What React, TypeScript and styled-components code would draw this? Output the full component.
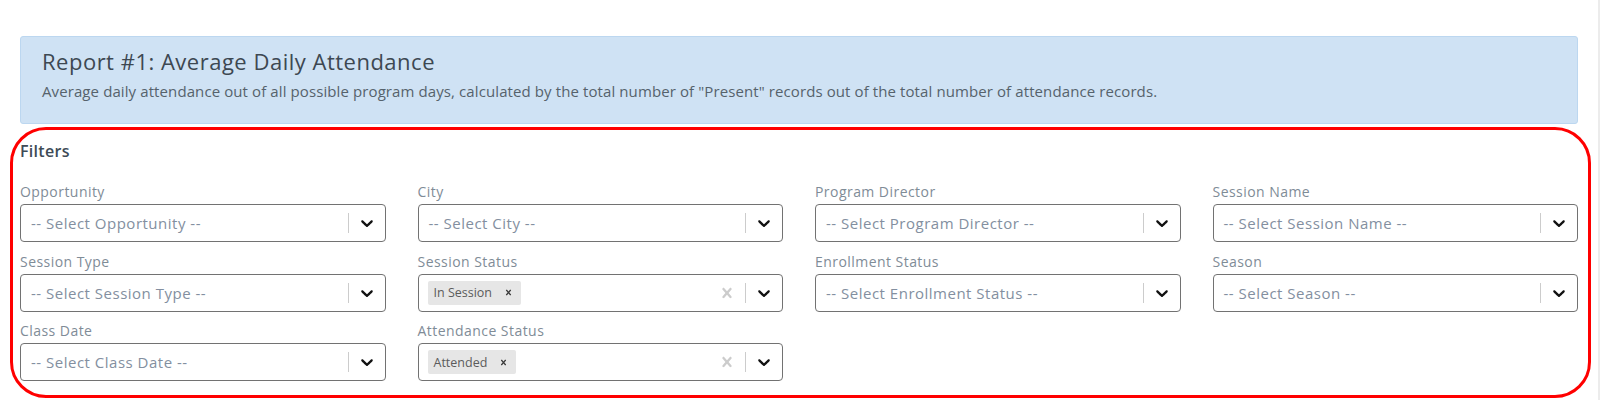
import React from "react";
import { createGlobalStyle, styled } from "styled-components";

const GlobalStyle = createGlobalStyle`
  html, body {
    margin: 0;
    padding: 0;
    background: #fff;
  }
  body {
    font-family: "Open Sans", "Liberation Sans", sans-serif;
    -webkit-font-smoothing: antialiased;
  }
  * {
    box-sizing: border-box;
  }
`;

const Page = styled.div`
  width: 1600px;
  min-height: 400px;
  padding: 36px 7px 0 10px;
  border-right: 2px solid #ececec;
`;

const ReportHeader = styled.div`
  margin: 0 13px 3px 10px;
  padding: 9px 21px 21px;
  background: #cfe2f4;
  border: 1px solid #bcd7f0;
  border-radius: 3px;
`;

const Title = styled.h2`
  margin: 0 0 4px;
  font-size: 22px;
  line-height: 30px;
  font-weight: 500;
  letter-spacing: 0.5px;
  color: #3d4852;
`;

const Description = styled.p`
  margin: 0;
  font-size: 15px;
  line-height: 22px;
  letter-spacing: 0.1px;
  color: #56626c;
`;

const FilterPanel = styled.section`
  border: 3px solid #ff0000;
  border-radius: 36px;
  padding: 10px 10px 12px 7px;
  height: 271px;
`;

const PanelHeading = styled.h3`
  margin: 0 0 20px;
  font-size: 16px;
  line-height: 22px;
  font-weight: 600;
  letter-spacing: 0.3px;
  color: #3e4b56;
`;

const FilterGrid = styled.div`
  display: grid;
  grid-template-columns: repeat(4, 1fr);
  column-gap: 32px;
  row-gap: 9.5px;
`;

const Field = styled.div`
  display: flex;
  flex-direction: column;
`;

const Label = styled.label`
  font-size: 14px;
  line-height: 20px;
  margin-bottom: 2px;
  color: #7f8c97;
  letter-spacing: 0.45px;
`;

const Control = styled.div`
  display: flex;
  align-items: center;
  height: 38px;
  border: 1px solid #727272;
  border-radius: 4px;
  background: #fff;
`;

const ValueArea = styled.div`
  flex: 1;
  display: flex;
  align-items: center;
  padding: 2px 8px;
  min-width: 0;
`;

const Placeholder = styled.span`
  margin: 0 2px;
  font-size: 15px;
  letter-spacing: 0.5px;
  color: #838fa0;
  white-space: nowrap;
`;

const Chip = styled.span`
  display: flex;
  align-items: center;
  height: 24px;
  margin: 0 1px;
  background: #e6e6e6;
  border-radius: 2px;
`;

const ChipLabel = styled.span`
  padding: 0 3px 0 6px;
  font-size: 12.5px;
  color: #5b5b5b;
`;

const ChipRemove = styled.span`
  display: flex;
  align-items: center;
  padding: 0 7px 0 8px;
  color: #3a3a3a;
`;

const Indicator = styled.div<{ $muted?: boolean }>`
  display: flex;
  align-items: center;
  justify-content: center;
  width: 36px;
  height: 36px;
  color: ${(p) => (p.$muted ? "#cccccc" : "#111111")};
`;

const Separator = styled.span`
  width: 1px;
  height: 20px;
  background: #cccccc;
`;

const Chevron = () => (
  <svg width="20" height="20" viewBox="0 0 20 20" fill="currentColor">
    <path d="M4.516 7.548c0.436-0.446 1.043-0.481 1.576 0l3.908 3.747 3.908-3.747c0.533-0.481 1.141-0.446 1.574 0 0.436 0.445 0.408 1.197 0 1.615-0.406 0.418-4.695 4.502-4.695 4.502-0.217 0.223-0.502 0.335-0.787 0.335s-0.57-0.112-0.789-0.335c0 0-4.287-4.084-4.695-4.502s-0.436-1.17 0-1.615z" />
  </svg>
);

const Cross = ({ size }: { size: number }) => (
  <svg width={size} height={size} viewBox="0 0 20 20" fill="currentColor">
    <path d="M14.348 14.849c-0.469 0.469-1.229 0.469-1.697 0l-2.651-3.030-2.651 3.029c-0.469 0.469-1.229 0.469-1.697 0-0.469-0.469-0.469-1.229 0-1.697l2.758-3.15-2.759-3.152c-0.469-0.469-0.469-1.228 0-1.697s1.228-0.469 1.697 0l2.652 3.031 2.651-3.031c0.469-0.469 1.228-0.469 1.697 0s0.469 1.229 0 1.697l-2.758 3.152 2.758 3.15c0.469 0.469 0.469 1.229 0 1.698z" />
  </svg>
);

type Filter = {
  label: string;
  selected?: string;
};

const filters: Filter[] = [
  { label: "Opportunity" },
  { label: "City" },
  { label: "Program Director" },
  { label: "Session Name" },
  { label: "Session Type" },
  { label: "Session Status", selected: "In Session" },
  { label: "Enrollment Status" },
  { label: "Season" },
  { label: "Class Date" },
  { label: "Attendance Status", selected: "Attended" },
];

const SelectFilter = ({ label, selected }: Filter) => (
  <Field>
    <Label>{label}</Label>
    <Control>
      <ValueArea>
        {selected ? (
          <Chip>
            <ChipLabel>{selected}</ChipLabel>
            <ChipRemove>
              <Cross size={11} />
            </ChipRemove>
          </Chip>
        ) : (
          <Placeholder>-- Select {label} --</Placeholder>
        )}
      </ValueArea>
      {selected && (
        <Indicator $muted>
          <Cross size={20} />
        </Indicator>
      )}
      <Separator />
      <Indicator>
        <Chevron />
      </Indicator>
    </Control>
  </Field>
);

export default function App() {
  return (
    <>
      <GlobalStyle />
      <Page>
        <ReportHeader>
          <Title>Report #1: Average Daily Attendance</Title>
          <Description>
            Average daily attendance out of all possible program days, calculated by the total
            number of "Present" records out of the total number of attendance records.
          </Description>
        </ReportHeader>
        <FilterPanel>
          <PanelHeading>Filters</PanelHeading>
          <FilterGrid>
            {filters.map((f) => (
              <SelectFilter key={f.label} {...f} />
            ))}
          </FilterGrid>
        </FilterPanel>
      </Page>
    </>
  );
}
